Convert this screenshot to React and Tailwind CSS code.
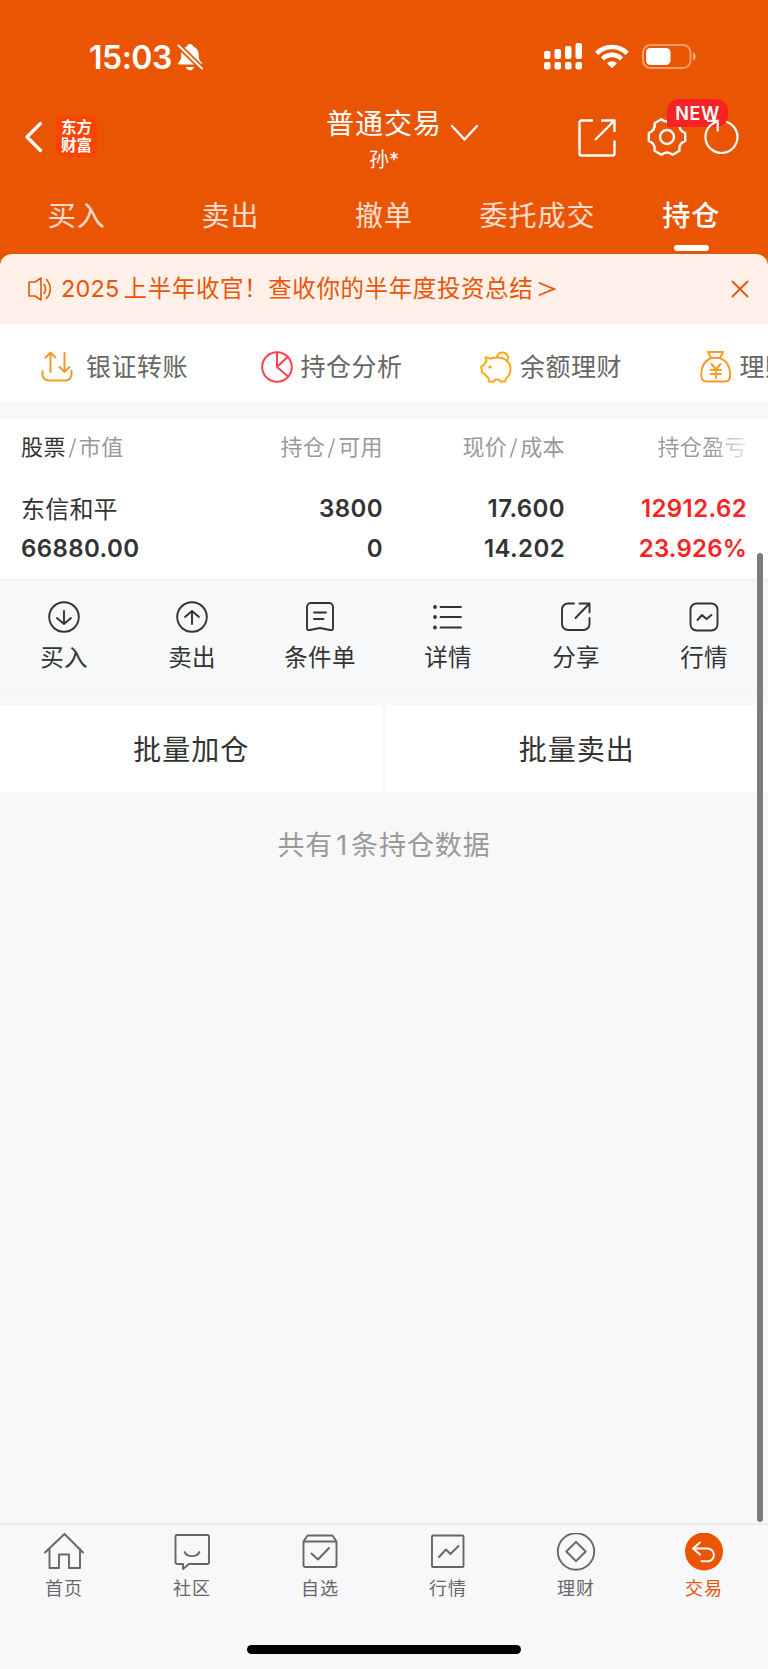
const S = ({ w, h = w, vb, sw = 2, className = "", children }) => (
  <svg
    width={w}
    height={h}
    viewBox={vb || `0 0 ${w} ${h}`}
    fill="none"
    stroke="currentColor"
    strokeWidth={sw}
    strokeLinecap="round"
    strokeLinejoin="round"
    className={`shrink-0 ${className}`}
  >
    {children}
  </svg>
);

function StatusBar() {
  return (
    <div className="flex h-[100px] items-start justify-between pt-[42px] pl-[89px] pr-[71px]">
      <div className="flex items-center">
        <span className="w-[88px] text-[32px] font-semibold leading-[31px] tracking-[-0.5px]">15:03</span>
        <S w={26} h={28} sw={2} className="-mt-px">
          <path d="M13 1c2 0 3 1.200 3.200 2.500 4.200 1.500 5.500 5 5.500 8.500 0 4 .8 5.500 2.800 7.500.8.900.4 2-.8 2H2.300c-1.200 0-1.600-1.100-.8-2 2-2 2.800-3.500 2.800-7.500 0-3.500 1.300-7 5.500-8.500C10 2.200 11 1 13 1z" fill="currentColor" stroke="none" />
          <path d="M9 24h8c-.4 2-2 3.200-4 3.200S9.400 26 9 24z" fill="currentColor" stroke="none" />
          <path d="M1.500 2.500L25 25.500" stroke="#ea5504" strokeWidth="5.500" />
          <path d="M1.500 2.500L25 25.500" />
        </S>
      </div>
      <div className="flex items-center">
        <S w={39} h={27} className="mt-px">
          <g fill="currentColor" stroke="none">
            <rect x="0" y="8" width="6.500" height="8" rx="2" />
            <rect x="10.500" y="6" width="6.500" height="10" rx="2" />
            <rect x="21" y="3" width="6.500" height="13" rx="2" />
            <rect x="31.500" y="0" width="6.500" height="16" rx="2" />
            <rect x="0" y="19" width="6.500" height="7.500" rx="2" />
            <rect x="10.500" y="19" width="6.500" height="7.500" rx="2" />
            <rect x="21" y="19" width="6.500" height="7.500" rx="2" />
            <rect x="31.500" y="19" width="6.500" height="7.500" rx="2" />
          </g>
        </S>
        <S w={34} h={25} className="ml-[12px]">
          <g strokeLinecap="butt" strokeWidth="4.600">
            <path d="M1.800 9.300a21.500 21.500 0 0 1 30.400 0" />
            <path d="M7.500 14.800a13.500 13.500 0 0 1 19 0" />
          </g>
          <path d="M17 24.300l-5-5a7 7 0 0 1 10 0z" fill="currentColor" stroke="none" />
        </S>
        <S w={55} h={25} className="ml-[13px]">
          <rect x="1" y="1" width="47.500" height="23" rx="7.500" strokeOpacity=".42" />
          <rect x="4" y="4" width="24.500" height="17" rx="4.500" fill="currentColor" stroke="none" />
          <path d="M51 8.500c3.500 1 3.500 7 0 8z" fill="currentColor" fillOpacity=".5" stroke="none" />
        </S>
      </div>
    </div>
  );
}

function TitleBar() {
  return (
    <div className="flex h-[76px] items-start">
      <S w={18} h={32} sw={3.2} className="ml-[25px] mt-[21px]">
        <path d="M15.500 2.500L2 16l13.500 13.500" />
      </S>
      <div className="ml-[13px] mt-[16px] w-[41px] rounded-[8px] bg-[#ff4200] pt-[3px] text-center text-[15.500px] font-bold leading-[17.500px] h-[41px]">
        东方
        <br />
        财富
      </div>
      <div className="ml-[228px] flex w-[118px] flex-col items-center">
        <span className="mt-[7px] text-[28px] leading-[34px] tracking-[1px] whitespace-nowrap">普通交易</span>
        <span className="mt-[7px] text-[20px] leading-[24px]">孙*</span>
      </div>
      <S w={28} h={18} sw={2.4} className="ml-[7px] mt-[24px]">
        <path d="M2 2l12.500 13.500L27 2" />
      </S>
      <S w={38} h={38} sw={2.4} className="ml-[100px] mt-[19px]">
        <path d="M15 1.500H3.500a2 2 0 0 0-2 2v31a2 2 0 0 0 2 2h31a2 2 0 0 0 2-2V21.500M23 1.500h13.500V13M36 2L17 21" strokeLinecap="butt" />
      </S>
      <div className="relative ml-[31px] mt-[17px] flex">
        <S w={40} h={40} sw={2.4}>
          <path d="M38.200 23.900Q31.400 26.600 32.400 33.800L25.700 37.700Q20 33.200 14.300 37.700L7.600 33.800Q8.600 26.600 1.800 23.900V16.100Q8.600 13.400 7.600 6.200L14.300 2.300Q20 6.800 25.700 2.300L32.400 6.200Q31.400 13.400 38.200 16.100Z" />
          <circle cx="20" cy="20" r="7" />
        </S>
        <span className="absolute left-[20px] top-[-18px] flex h-[28px] w-[61px] items-center justify-center rounded-[12px] rounded-bl-none bg-[#f52323] text-[18px] font-semibold tracking-[0.6px]">NEW</span>
        <S w={38} h={40} sw={2.2} className="relative ml-[16px]">
          <path d="M23.200 4.700A16 16 0 1 1 7.500 8.300L14.600 3.800M4 3.800H14.700V14.500" strokeLinecap="butt" strokeLinejoin="miter" />
        </S>
      </div>
    </div>
  );
}

function Tabs() {
  const tabs = ["买入", "卖出", "撤单", "委托成交", "持仓"];
  return (
    <div className="grid h-[78px] grid-cols-5">
      {tabs.map((t, i) => (
        <div
          key={t}
          className={`flex flex-col items-center pt-[23px] text-[28px] leading-[34px] tracking-[1px] ${i === 4 ? "font-medium text-white" : "text-white/80"}`}
        >
          {t}
          {i === 4 && <span className="mt-[12px] h-[6px] w-[35px] shrink-0 rounded-full bg-white" />}
        </div>
      ))}
    </div>
  );
}

function Notice() {
  return (
    <div className="flex h-[70px] items-center rounded-t-[12px] bg-[#fff1ea] text-[#ea5504]">
      <S w={24} h={24} sw={1.6} className="ml-[28px]">
        <path d="M1 5h6l6-4v22l-6-4H1zM16 7.500c2 2.500 2 6.500 0 9M18.500 2.500c5 5.500 5 13.500 0 19" />
      </S>
      <span className="ml-[9px] text-[23.500px] tracking-[0.6px] whitespace-nowrap">
        <span className="mr-[4px] tracking-[0.2px]">2025</span>上半年收官！查收你的半年度投资总结
      </span>
      <S w={18} h={16} sw={1.8} className="ml-[5px]">
        <path d="M1.500 2L16 8 1.500 14" strokeLinejoin="miter" />
      </S>
      <S w={18} h={18} sw={1.8} className="ml-auto mr-[19px]">
        <path d="M1.500 1.500l15 15M16.500 1.500l-15 15" />
      </S>
    </div>
  );
}

const quick = [
  {
    label: "银证转账",
    color: "text-[#f09a28]",
    gap: "gap-[13px]",
    icon: (
      <path d="M1.500 20v3.500a6 6 0 0 0 6 6h17a6 6 0 0 0 6-6V20M9.500 21V2M4.500 6.500L9.500 1.500l5 5M23.500 2v19M18.500 16l5 5 5-5" />
    ),
  },
  {
    label: "持仓分析",
    color: "text-[#fb4250]",
    gap: "gap-[8px]",
    icon: (
      <>
        <circle cx="16" cy="16" r="14.800" />
        <path d="M16 1.500V16L26.500 6M16 16l10.500 9" />
      </>
    ),
  },
  {
    label: "余额理财",
    color: "text-[#fba812]",
    gap: "gap-[8px]",
    icon: (
      <>
        <path d="M5.500 6.500c2-.2 3.500.3 4.500 1.300C12 7 14 6.500 17 6.500c8 0 13.500 4.500 13.500 11.500 0 4-2 7.500-4.500 9.500l-.8 3h-5l-1.200-2h-4l-1.200 2h-5L8.500 27c-1.500-1-2.500-2.300-3.200-3.500L2 21.500l-.8-6L4 13.800c.5-1.200 1.200-2 2.500-3.300z" />
        <path d="M16.800 6.200c1-6 9.500-6.500 11-.8.5 2 0 3.500-1 4.800" />
        <circle cx="10" cy="16" r="1.200" fill="currentColor" strokeWidth="1" />
      </>
    ),
  },
  {
    label: "理财",
    color: "text-[#fa9a28]",
    gap: "gap-[8px]",
    icon: (
      <>
        <path d="M8 1h15l-3 6h-9zM11 7C4 10 1.200 16.500 1.200 24c0 5 2 6.500 5.500 6.500h18c3.500 0 5.500-1.500 5.500-6.500 0-7.500-3-14-10.200-17" />
        <path d="M11.500 13l4.500 5.500 4.500-5.500M10.500 19h10.500M10.500 23h10.500M15.900 18.500V27" />
      </>
    ),
  },
];

function QuickLinks() {
  return (
    <div className="flex h-[78px] items-center overflow-hidden bg-white pl-[41px] pt-[7px]">
      {quick.map((q) => (
        <div key={q.label} className={`flex w-[219.500px] shrink-0 items-center ${q.gap}`}>
          <S w={32} sw={2} className={q.color}>{q.icon}</S>
          <span className="text-[25px] leading-[32px] tracking-[0.5px] whitespace-nowrap text-[#666]">{q.label}</span>
        </div>
      ))}
    </div>
  );
}

function Slash() {
  return (
    <span className="mr-[3px] ml-[3px] inline-block h-[20px] w-[7px] align-[-3px]">
      <S w={7} h={20} sw={1.5}><path d="M6.300 1L.7 19" /></S>
    </span>
  );
}

function Holdings() {
  return (
    <div className="h-[161px] border-b border-[#eceef0] bg-white px-[21px] pt-[13px]">
      <div className="grid grid-cols-[181px_181px_182px_182px] text-right text-[22px] leading-[30px] tracking-[0.4px] whitespace-nowrap text-[#999]">
        <div className="text-left"><span className="text-[#333]">股票</span><Slash />市值</div>
        <div>持仓<Slash />可用</div>
        <div>现价<Slash />成本</div>
        <div className="bg-linear-to-r from-[#999] from-80% to-[#e8e8e8] bg-clip-text text-transparent">持仓盈亏</div>
      </div>
      <div className="mt-[27px] grid grid-cols-[181px_181px_182px_182px] text-right text-[24px] font-semibold leading-[40px] tracking-[0.4px] text-[#333]">
        <div className="pt-px text-left font-normal leading-[39px] tracking-[0.2px]">东信和平</div>
        <div>3800</div>
        <div>17.600</div>
        <div className="text-[#fa2323]">12912.62</div>
        <div className="text-left">66880.00</div>
        <div>0</div>
        <div>14.202</div>
        <div className="tracking-[0.2px] text-[#fa2323]">23.926%</div>
      </div>
    </div>
  );
}

const actions = [
  ["买入", <><circle cx="16" cy="16" r="14.800" /><path d="M16 10v13M9 17l7 6 7-6" /></>],
  ["卖出", <><circle cx="16" cy="16" r="14.800" /><path d="M16 23V10M9 16l7-6 7 6" /></>],
  ["条件单", <><path d="M3 6a4 4 0 0 1 4-4h18a4 4 0 0 1 4 4v21c0 2-1 2.500-3 2L16 27l-10 2c-2 .5-3 0-3-2z" /><path d="M10 11.500h12M10 18h9.500" /></>],
  ["详情", <><path d="M8.500 6H29M8.500 16H29M8.500 26.500H29" /><path d="M3 6h.01M3 16h.01M3 26.500h.01" strokeWidth="3.800" /></>],
  ["分享", <path d="M14 2.500H8a6 6 0 0 0-6 6V23a6 6 0 0 0 6 6h15.500a6 6 0 0 0 6-6v-6M19.500 2.500h10v9M29 3L15.500 17" />],
  ["行情", <><rect x="2.500" y="2.500" width="27" height="27" rx="6" /><path d="M9.500 19l4.500-5 4.500 4 5-4" /></>],
];

function Actions() {
  return (
    <div className="grid h-[112px] grid-cols-6 border-b border-[#f1f2f5] text-[#333]">
      {actions.map(([label, icon]) => (
        <div key={label} className="flex flex-col items-center pt-[21px]">
          <S w={32} sw={1.900}>{icon}</S>
          <span className="mt-[10px] text-[23.500px] leading-[30px] tracking-[0.3px]">{label}</span>
        </div>
      ))}
    </div>
  );
}

const nav = [
  ["首页", <path d="M1 19.500L20.500 1l18.500 18.500M5.500 16v19H15V21.500h10V35h11V16" />],
  ["社区", <><path d="M5 2h30.500a1.500 1.500 0 0 1 1.500 1.500v26a1.500 1.500 0 0 1-1.500 1.500H17l-6 5v-5H5a1.500 1.500 0 0 1-1.500-1.500v-26A1.500 1.500 0 0 1 5 2z" /><path d="M12.500 19c3 5.500 12 5.500 15 0" /></>],
  ["自选", <><path d="M3.500 8.500L7.500 2.500h25l4 6V32a2 2 0 0 1-2 2h-29a2 2 0 0 1-2-2zM3.500 8.500h33M11.500 20.500l6.500 6 11-11.500" /></>],
  ["行情", <><rect x="4" y="2.500" width="31.500" height="31.500" rx="1" /><path d="M11 24l7-7.500 4.500 4.500 8-8" /></>],
  ["理财", <><circle cx="20" cy="18.500" r="18.200" /><path d="M20 8.800l9.700 9.700-9.700 9.700-9.700-9.700z" /></>],
  ["交易", <><circle cx="20" cy="18.500" r="19" fill="#ea5504" stroke="none" /><path d="M16 9.500l-7 6 7 6M9.500 15.500h14a6.300 6.300 0 0 1 0 12.800h-6" stroke="#fff" strokeWidth="2" /></>],
];

function BottomNav() {
  return (
    <div className="flex h-[146px] flex-col items-center border-t-2 border-[#e9ebef] bg-[#f8f8fb]">
      <div className="grid w-full grid-cols-6 text-[#666]">
        {nav.map(([label, icon], i) => (
          <div key={label} className={`flex flex-col items-center pt-[8px] ${i === 5 ? "text-[#ea5504]" : ""}`}>
            <S w={40} h={38} sw={1.900}>{icon}</S>
            <span className="mt-[6px] text-[18px] leading-[24px] tracking-[1px]">{label}</span>
          </div>
        ))}
      </div>
      <div className="mt-[44px] h-[9px] w-[274px] rounded-full bg-black" />
    </div>
  );
}

export default function App() {
  return (
    <div className="relative flex h-[1669px] w-[768px] flex-col overflow-hidden bg-[#f7f8fa] font-['Inter','Noto_Sans_CJK_SC',sans-serif]">
      <div className="bg-[#ea5504] text-white">
        <StatusBar />
        <TitleBar />
        <Tabs />
        <Notice />
      </div>
      <QuickLinks />
      <div className="h-[17px] shrink-0" />
      <Holdings />
      <Actions />
      <div className="mt-[13px] grid h-[87px] shrink-0 grid-cols-2 gap-[3px] text-center text-[28px] leading-[90px] tracking-[1px] text-[#333]">
        <div className="h-[87px] bg-white">批量加仓</div>
        <div className="h-[87px] bg-white">批量卖出</div>
      </div>
      <div className="mt-[34px] text-center text-[27px] leading-[40px] tracking-[0.9px] text-[#999]">
        共有<span className="mx-[3px]">1</span>条持仓数据
      </div>
      <div className="mt-auto">
        <BottomNav />
      </div>
      <div className="absolute left-[757px] top-[553px] h-[969px] w-[6px] rounded-full bg-[#7b7c7e]" />
    </div>
  );
}
